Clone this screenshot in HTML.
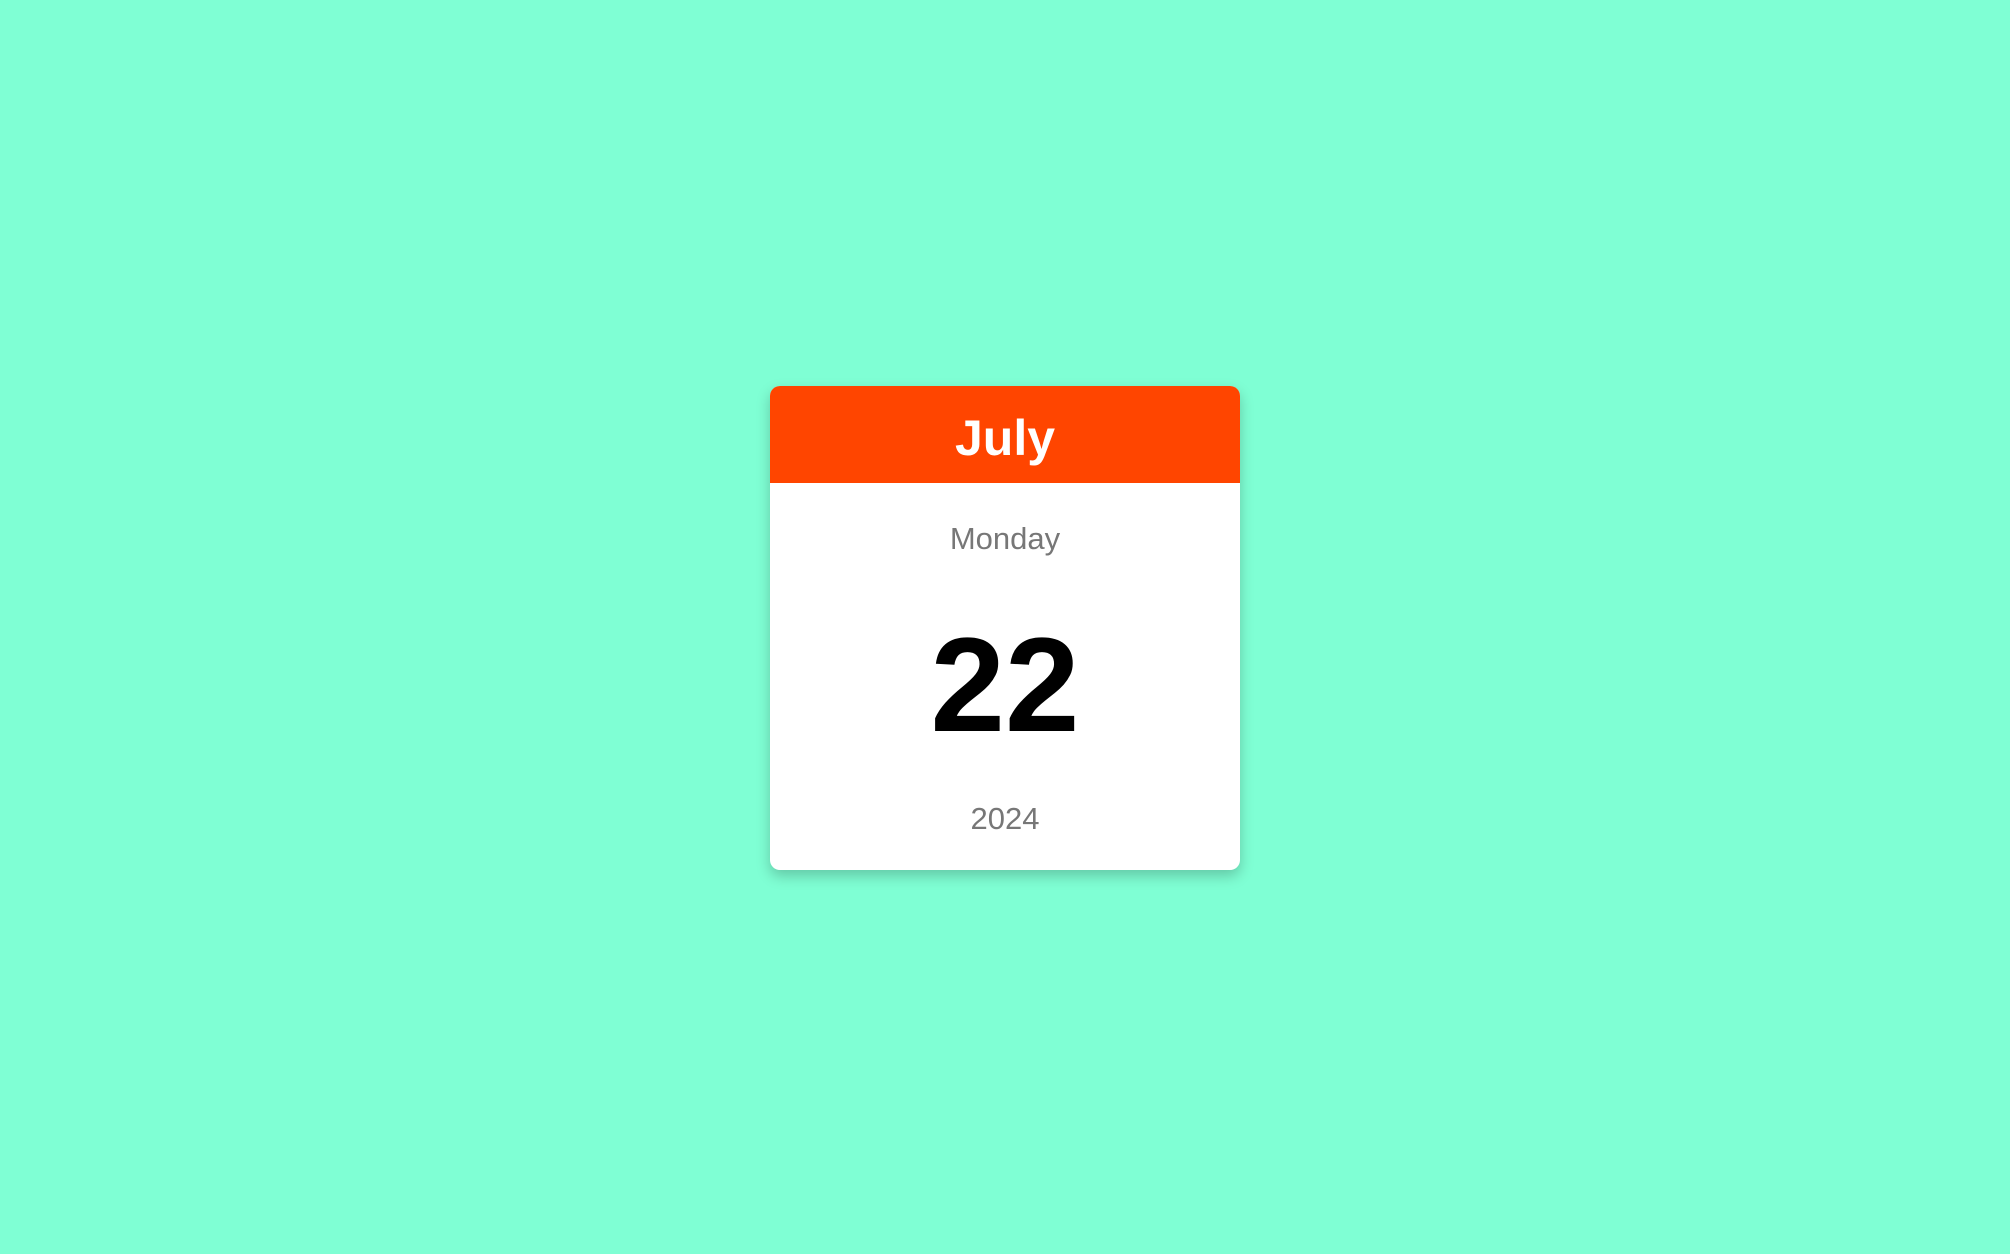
<!DOCTYPE html>
<html><head><style>
html,body{margin:0;padding:0;width:2010px;height:1254px;background:#7fffd4;overflow:hidden;font-family:"Comic Sans MS","Liberation Sans",sans-serif;}
.card{position:absolute;left:770px;top:386px;width:470px;height:484px;background:#fff;border-radius:10px;box-shadow:0 6px 14px rgba(0,0,0,0.22);overflow:hidden;}
.hd{height:97px;background:#ff4500;color:#fff;font-weight:bold;font-size:50px;text-align:center;line-height:104px;}
.t{position:absolute;left:0;width:100%;text-align:center;}
.day{top:135px;font-size:31px;color:#777;}
.num{top:225px;font-size:134px;font-weight:bold;color:#000;line-height:150px;}
.yr{top:415px;font-size:31px;color:#777;}
</style></head><body>
<div class="card">
<div class="hd">July</div>
<div class="t day">Monday</div>
<div class="t num">22</div>
<div class="t yr">2024</div>
</div>
</body></html>
